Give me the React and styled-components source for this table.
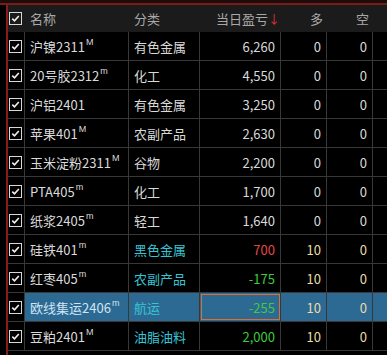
import React from "react";
import styled, { createGlobalStyle } from "styled-components";

const GlobalStyle = createGlobalStyle`
  html, body {
    margin: 0;
    padding: 0;
    background: #000000;
  }
  body {
    font-family: "Noto Sans CJK SC", "Liberation Sans", sans-serif;
  }
`;

const Page = styled.div`
  width: 387px;
  height: 355px;
  overflow: hidden;
  background: #000000;
  display: flex;
  flex-direction: column;
`;

const TopBand = styled.div`
  height: 3px;
  background: #1c0c0c;
  border-bottom: 2px solid #7d1a1a;
`;

const Frame = styled.div`
  flex: 1;
  display: flex;
  padding-left: 6px;
`;

const Table = styled.div`
  flex: 1;
  border-left: 2px solid #861c1c;
  display: flex;
  flex-direction: column;
`;

const cols = "17px 104px 71px 81px 46px 46px 1fr";

const HeaderRow = styled.div`
  display: grid;
  grid-template-columns: ${cols};
  height: 27px;
  background: #1b1b1b;
  color: #a8a8a8;
  font-size: 13px;
  align-items: center;
`;

const Row = styled.div`
  display: grid;
  grid-template-columns: ${cols};
  height: 29px;
  box-sizing: border-box;
  border-bottom: 1px solid #383838;
  background: ${({ $selected }) => ($selected ? "#2d6a93" : "#000000")};
  font-size: 13px;
`;

const Cell = styled.div`
  display: flex;
  align-items: center;
  justify-content: ${({ $align }) => ($align === "right" ? "flex-end" : "flex-start")};
  padding: ${({ $align }) => ($align === "right" ? "0 5px 0 0" : "0 0 0 5px")};
  border-right: 1px solid ${({ $noLine }) => ($noLine ? "transparent" : "#383838")};
  color: ${({ $color }) => $color || "#dadada"};
  white-space: nowrap;
  overflow: hidden;
  box-sizing: border-box;
  ${({ $focus }) => ($focus ? "outline: 1px solid #d2733a; outline-offset: -2px;" : "")}
`;

const HeadCell = styled.div`
  display: flex;
  align-items: center;
  justify-content: ${({ $align }) => ($align === "right" ? "flex-end" : "flex-start")};
  padding: ${({ $align, $pad }) => ($align === "right" ? `0 ${$pad ?? 4}px 0 0` : "0 0 0 5px")};
  white-space: nowrap;
`;

const CheckCell = styled.div`
  display: flex;
  align-items: center;
  justify-content: flex-end;
  padding-right: 2px;
  background: #000000;
  border-right: 1px solid ${({ $noLine }) => ($noLine ? "transparent" : "#383838")};
  ${({ $noLine }) => ($noLine ? "background: transparent;" : "")}
`;

const Box = styled.div`
  width: 11px;
  height: 11px;
  border: 1px solid #d8d8d8;
  display: flex;
  align-items: center;
  justify-content: center;
`;

const Sup = styled.span`
  font-size: 9px;
  align-self: flex-start;
  margin-top: 5px;
  margin-left: 1px;
  font-family: "Liberation Sans", sans-serif;
`;

const Arrow = styled.span`
  color: #e03030;
  font-size: 12px;
`;

const Check = () => (
  <Box>
    <svg width="9" height="9" viewBox="0 0 9 9">
      <path d="M1.3 4.6 L3.5 6.8 L7.8 2" fill="none" stroke="#f0f0f0" strokeWidth="1.6" />
    </svg>
  </Box>
);

const WHITE = "#dadada";
const CYAN = "#38c4d4";
const CREAM = "#eadcaa";
const GREEN = "#3fcb3f";
const RED = "#e34848";

const rows = [
  { name: "沪镍2311", sup: "M", cat: "有色金属", pnl: "6,260", duo: "0", kong: "0" },
  { name: "20号胶2312", sup: "m", cat: "化工", pnl: "4,550", duo: "0", kong: "0" },
  { name: "沪铝2401", sup: "", cat: "有色金属", pnl: "3,250", duo: "0", kong: "0" },
  { name: "苹果401", sup: "M", cat: "农副产品", pnl: "2,630", duo: "0", kong: "0" },
  { name: "玉米淀粉2311", sup: "M", cat: "谷物", pnl: "2,200", duo: "0", kong: "0" },
  { name: "PTA405", sup: "m", cat: "化工", pnl: "1,700", duo: "0", kong: "0" },
  { name: "纸浆2405", sup: "m", cat: "轻工", pnl: "1,640", duo: "0", kong: "0" },
  { name: "硅铁401", sup: "m", cat: "黑色金属", pnl: "700", duo: "10", kong: "0", hot: true, pnlColor: RED },
  { name: "红枣405", sup: "m", cat: "农副产品", pnl: "-175", duo: "10", kong: "0", hot: true, pnlColor: GREEN },
  { name: "欧线集运2406", sup: "m", cat: "航运", pnl: "-255", duo: "10", kong: "0", hot: true, pnlColor: GREEN, selected: true },
  { name: "豆粕2401", sup: "M", cat: "油脂油料", pnl: "2,000", duo: "10", kong: "0", hot: true, pnlColor: GREEN },
];

export default function App() {
  return (
    <Page>
      <GlobalStyle />
      <TopBand />
      <Frame>
        <Table>
          <HeaderRow>
            <CheckCell $noLine>
              <Check />
            </CheckCell>
            <HeadCell>名称</HeadCell>
            <HeadCell>分类</HeadCell>
            <HeadCell $align="right" $pad={1}>
              当日盈亏<Arrow>↓</Arrow>
            </HeadCell>
            <HeadCell $align="right" $pad={4}>多</HeadCell>
            <HeadCell $align="right" $pad={4}>空</HeadCell>
            <HeadCell />
          </HeaderRow>
          {rows.map((r) => (
            <Row key={r.name} $selected={r.selected}>
              <CheckCell>
                <Check />
              </CheckCell>
              <Cell $color={r.selected ? "#cfe4f4" : WHITE}>
                {r.name}
                {r.sup && <Sup>{r.sup}</Sup>}
              </Cell>
              <Cell $color={r.hot ? CYAN : WHITE}>{r.cat}</Cell>
              <Cell $align="right" $color={r.pnlColor || WHITE} $focus={r.selected}>
                {r.pnl}
              </Cell>
              <Cell $align="right" $color={r.hot ? CREAM : WHITE}>{r.duo}</Cell>
              <Cell $align="right" $color={r.hot ? CREAM : WHITE}>{r.kong}</Cell>
              <Cell $noLine />
            </Row>
          ))}
        </Table>
      </Frame>
    </Page>
  );
}
